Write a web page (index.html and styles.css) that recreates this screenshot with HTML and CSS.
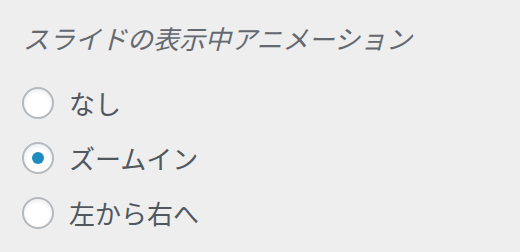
FILE: index.html
```html
<!DOCTYPE html>
<html lang="ja">
<head>
<meta charset="utf-8">
<link rel="stylesheet" href="styles.css">
</head>
<body>
<div class="panel">
  <div class="title">スライドの表示中アニメーション</div>
  <div class="options">
    <label class="option"><span class="radio"></span><span class="label">なし</span></label>
    <label class="option"><span class="radio checked"></span><span class="label">ズームイン</span></label>
    <label class="option"><span class="radio"></span><span class="label">左から右へ</span></label>
  </div>
</div>
</body>
</html>
```
FILE: styles.css
```css
html, body {
  margin: 0;
  padding: 0;
  background: #eeeeee;
}
.panel {
  width: 520px;
  height: 252px;
  box-sizing: border-box;
  padding: 20px 0 0 22px;
  font-family: "Noto Sans CJK JP", "Noto Sans", sans-serif;
}
.title {
  font-size: 26px;
  line-height: 36px;
  font-style: italic;
  color: #646970;
  padding-left: 1px;
}
.options {
  display: flex;
  flex-direction: column;
  gap: 23px;
  margin-top: 31px;
}
.option {
  display: flex;
  align-items: center;
  gap: 15px;
  height: 32px;
}
.radio {
  width: 32px;
  height: 32px;
  box-sizing: border-box;
  border-radius: 50%;
  border: 2px solid #b4b9be;
  background: #ffffff;
  box-shadow: inset 0 2px 4px rgba(0,0,0,0.08);
  display: flex;
  align-items: center;
  justify-content: center;
  flex: none;
}
.radio.checked::after {
  content: "";
  width: 12px;
  height: 12px;
  border-radius: 50%;
  background: #1e8cbe;
}
.label {
  font-size: 26px;
  line-height: 32px;
  color: #50575e;
}
```
